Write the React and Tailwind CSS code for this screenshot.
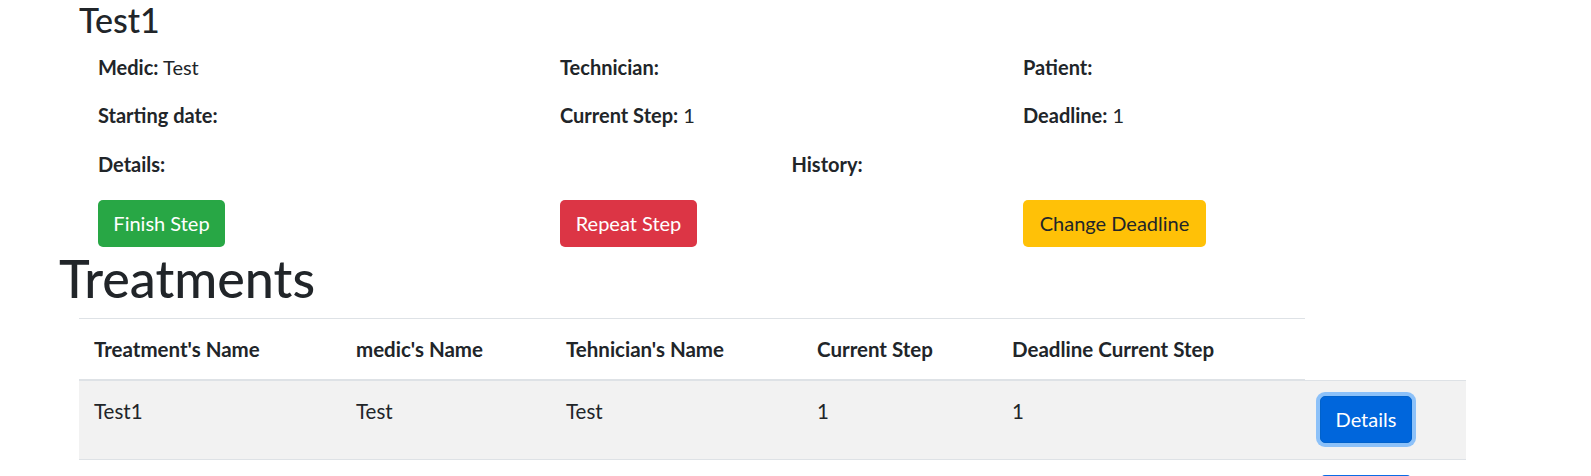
import React from 'react';

const treatment = {
    name: 'Test1',
    medic: 'Test',
    technician: '',
    patient: '',
    startingDate: '',
    currentStep: 1,
    deadline: 1
};

const rows = [
    { id: 1, name: 'Test1', medic: 'Test', technician: 'Test', step: 1, deadline: 1, focused: true },
    { id: 2, name: '', medic: '', technician: '', step: '', deadline: '', focused: false }
];

const Field = ({ label, value }) => (
    <div className="leading-[30px]">
        <strong className="font-bold">{label}:</strong>{value !== '' && value !== undefined ? ` ${value}` : ''}
    </div>
);

const App = () => {
    return (
        <div className="min-h-screen bg-white text-[#212529] font-['Lato',sans-serif] text-[20px] overflow-hidden">
            {/* Treatment header */}
            <h3 className="pl-[79px] text-[34px] leading-[1.2] font-medium">{treatment.name}</h3>

            <div className="pl-[98px] pt-[11px]">
                <div className="grid grid-cols-[462px_463px_462px] gap-y-[18.5px] w-[1387px]">
                    <Field label="Medic" value={treatment.medic} />
                    <Field label="Technician" value={treatment.technician} />
                    <Field label="Patient" value={treatment.patient} />
                    <Field label="Starting date" value={treatment.startingDate} />
                    <Field label="Current Step" value={treatment.currentStep} />
                    <Field label="Deadline" value={treatment.deadline} />
                </div>
                <div className="grid grid-cols-2 w-[1387px] mt-[18.5px]">
                    <Field label="Details" value="" />
                    <Field label="History" value="" />
                </div>
                <div className="grid grid-cols-[462px_463px_462px] w-[1387px] mt-[21px]">
                    <div>
                        <button className="w-[127px] h-[47px] rounded-[5px] bg-[#28a745] text-white leading-[30px]">
                            Finish Step
                        </button>
                    </div>
                    <div>
                        <button className="w-[137px] h-[47px] rounded-[5px] bg-[#dc3545] text-white leading-[30px]">
                            Repeat Step
                        </button>
                    </div>
                    <div>
                        <button className="w-[183px] h-[47px] rounded-[5px] bg-[#ffc107] text-[#212529] leading-[30px]">
                            Change Deadline
                        </button>
                    </div>
                </div>
            </div>

            {/* Treatments list */}
            <h1 className="pl-[59px] mt-[0.7px] text-[52px] leading-[1.2] font-medium">Treatments</h1>

            <table className="ml-[79px] mt-[8.4px] border-collapse table-fixed w-[1387px] text-[20.5px]">
                <colgroup>
                    <col className="w-[262px]" />
                    <col className="w-[210px]" />
                    <col className="w-[251px]" />
                    <col className="w-[195px]" />
                    <col className="w-[308px]" />
                    <col className="w-[161px]" />
                </colgroup>
                <thead>
                    <tr>
                        {["Treatment's Name", "medic's Name", "Tehnician's Name", 'Current Step', 'Deadline Current Step'].map(h => (
                            <th
                                key={h}
                                className="text-left align-bottom font-bold leading-[30px] p-[15px] border-t border-b-2 border-[#dee2e6] whitespace-nowrap"
                            >
                                {h}
                            </th>
                        ))}
                    </tr>
                </thead>
                <tbody>
                    {rows.map((row, index) => (
                        <tr key={row.id} className={index % 2 === 0 ? 'bg-[#f2f2f2]' : 'bg-white'}>
                            <td className="align-top leading-[30px] p-[15px] border-t border-[#dee2e6]">{row.name}</td>
                            <td className="align-top leading-[30px] p-[15px] border-t border-[#dee2e6]">{row.medic}</td>
                            <td className="align-top leading-[30px] p-[15px] border-t border-[#dee2e6]">{row.technician}</td>
                            <td className="align-top leading-[30px] p-[15px] border-t border-[#dee2e6]">{row.step}</td>
                            <td className="align-top leading-[30px] p-[15px] border-t border-[#dee2e6]">{row.deadline}</td>
                            <td className="align-top px-[15px] pt-[15px] pb-[16px] border-t border-[#dee2e6]">
                                <button
                                    className={`w-[92px] h-[47px] rounded-[5px] text-white text-[20px] leading-[30px] border ${
                                        row.focused
                                            ? 'bg-[#0066dc] border-[#0062cc] shadow-[0_0_0_4px_rgba(38,143,255,0.5)]'
                                            : 'bg-[#0b6be6] border-[#0b6be6]'
                                    }`}
                                >
                                    {row.focused ? 'Details' : ''}
                                </button>
                            </td>
                        </tr>
                    ))}
                </tbody>
            </table>
        </div>
    );
};

export default App;
